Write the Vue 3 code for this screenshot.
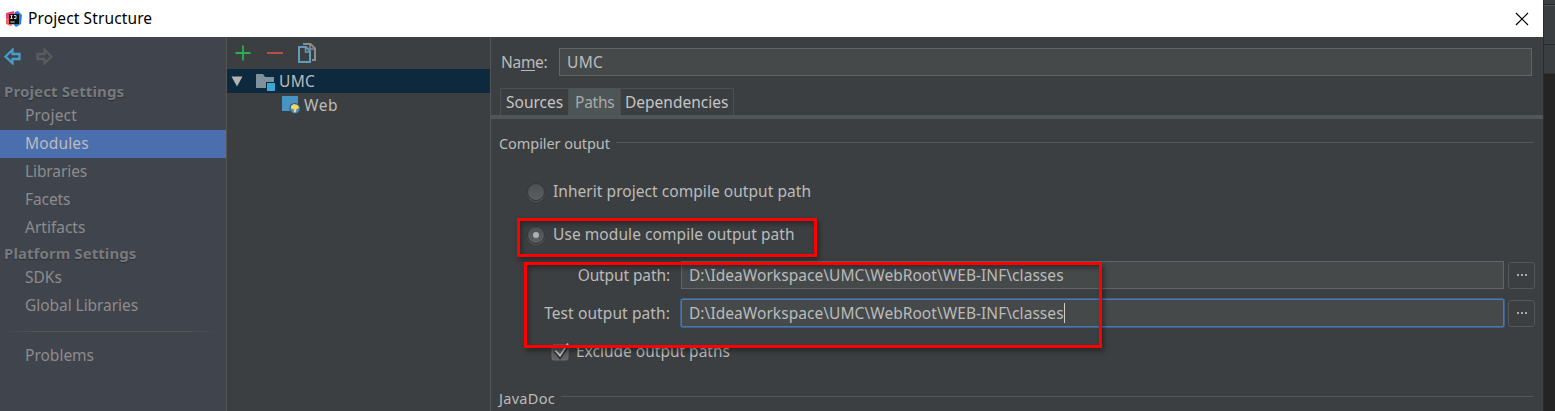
<script setup>
const projectItems = [
  { label: 'Project', ls: 'w-project' },
  { label: 'Modules', ls: 'w-modules', active: true },
  { label: 'Libraries', ls: 'w-libraries' },
  { label: 'Facets', ls: 'w-facets' },
  { label: 'Artifacts', ls: 'w-artifacts' },
]
const platformItems = [
  { label: 'SDKs', ls: 'w-sdks' },
  { label: 'Global Libraries', ls: 'w-global' },
]
const outputPath = 'D:\\IdeaWorkspace\\UMC\\WebRoot\\WEB-INF\\classes'
</script>

<template>
  <div class="screen">
    <div class="dialog">
      <header class="titlebar">
        <svg class="logo" width="16" height="16" viewBox="0 0 16 16">
          <path d="M0 2 4 1 8 0 9 4 4 9 0 8Z" fill="#f0437a" />
          <path d="M0 9 4 5 7 13 5 15 0 13Z" fill="#f2605c" />
          <path d="M9 1 12 0 16 4 15 13 10 16 6 12Z" fill="#1b7ff0" />
          <rect x="3" y="3" width="10" height="10" fill="#111" />
          <path d="M4.5 4.5h2M5.5 4.5v3M4.5 7.5h2M8 4.5h2v3H8M4.5 11h4" stroke="#ddd" fill="none" />
        </svg>
        <span class="title">Project Structure</span>
        <svg class="close" width="14" height="14" viewBox="0 0 14 14">
          <path d="M1 1 13 13M13 1 1 13" stroke="#000" stroke-width="1.2" />
        </svg>
      </header>

      <div class="body">
        <nav class="sidebar">
          <div class="history">
            <svg width="17" height="17" viewBox="0 0 17 17">
              <path d="M1.5 8.5 8.500 1.800V6H15.5V11H8.500V15.200Z" fill="none" stroke="#4a9cc9" stroke-width="2.300" />
            </svg>
            <svg width="17" height="17" viewBox="0 0 17 17">
              <path d="M15.5 8.5 8.500 1.800V6H1.5V11H8.500V15.200Z" fill="none" stroke="#5a5b5c" stroke-width="2.300" />
            </svg>
          </div>
          <div class="group first"><span class="w-ps">Project Settings</span></div>
          <div v-for="i in projectItems" :key="i.label" class="item" :class="{ active: i.active }">
            <span :class="i.ls">{{ i.label }}</span>
          </div>
          <div class="group"><span class="w-pf">Platform Settings</span></div>
          <div v-for="i in platformItems" :key="i.label" class="item">
            <span :class="i.ls">{{ i.label }}</span>
          </div>
          <div class="rule"></div>
          <div class="item"><span class="w-problems">Problems</span></div>
        </nav>

        <section class="tree">
          <div class="tools">
            <svg width="16" height="16" viewBox="0 0 16 16"><path d="M8 0.500V15.500M0.500 8H15.500" stroke="#27b04b" stroke-width="1.8" /></svg>
            <svg width="16" height="16" viewBox="0 0 16 16"><path d="M0 8H16" stroke="#cd5146" stroke-width="1.8" /></svg>
            <svg class="copy" width="18" height="20" viewBox="0 0 18 20">
              <path d="M5 1H12.500L17 5.500V17H14" fill="none" stroke="#8a8d8f" stroke-width="2" />
              <path d="M12 1V6H17" fill="none" stroke="#8a8d8f" stroke-width="1.500" />
              <path d="M1 4H8L12 8V19H1Z" fill="#3c3f41" stroke="#609dbd" stroke-width="2" />
              <path d="M7.500 4V9H12" fill="none" stroke="#609dbd" stroke-width="1.500" />
            </svg>
          </div>
          <div class="node selected">
            <svg class="caret" width="12" height="11" viewBox="0 0 12 11"><path d="M0.500 0.500H11.500L6 10.500Z" fill="#b3b3b3" /></svg>
            <svg class="folder" width="20" height="18" viewBox="0 0 20 18">
              <path d="M0 1H7L9 4H18V15H0Z" fill="#7f919d" />
              <rect x="10" y="9" width="10" height="9" fill="#0d293e" />
              <rect x="11" y="10" width="8" height="8" fill="#3ba7d6" />
            </svg>
            <span class="w-umc">UMC</span>
          </div>
          <div class="node child">
            <svg class="web" width="18" height="18" viewBox="0 0 18 18">
              <rect x="0" y="0" width="16" height="15" fill="#4794c1" />
              <circle cx="13" cy="12.500" r="5.500" fill="#3c4a52" />
              <circle cx="13" cy="12.500" r="4.700" fill="#3b8ed4" />
              <path d="M9 10 12 8 16 9.500 17 12 14.500 13 14 16 12 16.500 11.500 13 9 12.500Z" fill="#fbd65c" />
            </svg>
            <span class="w-web">Web</span>
          </div>
        </section>

        <main class="content">
          <div class="name-row">
            <label class="w-name">Na<u>m</u>e:</label>
            <div class="field"><span class="w-umc">UMC</span></div>
          </div>
          <div class="tabs">
            <div class="tab t1"><span class="w-sources">Sources</span></div>
            <div class="tab t2 on"><span class="w-paths">Paths</span></div>
            <div class="tab t3"><span class="w-deps">Dependencies</span></div>
          </div>
          <div class="section compiler"><span class="w-compiler">Compiler output</span><i></i></div>
          <div class="option o1"><b class="radio"></b><span class="w-inherit">Inherit project compile output path</span></div>
          <div class="option o2"><b class="radio checked"></b><span class="w-use">Use module compile output path</span></div>
          <div class="path-row p1">
            <label><span class="w-out">Output path:</span></label>
            <div class="field"><span class="w-path">{{ outputPath }}</span></div>
            <button><i></i><i></i><i></i></button>
          </div>
          <div class="path-row p2">
            <label><span class="w-test">Test output path:</span></label>
            <div class="field focused"><span class="w-path">{{ outputPath }}</span><em></em></div>
            <button><i></i><i></i><i></i></button>
          </div>
          <div class="exclude">
            <svg width="19" height="19" viewBox="0 0 19 19">
              <defs><linearGradient id="cb" x1="0" y1="0" x2="0" y2="1"><stop offset="0" stop-color="#505254" /><stop offset="1" stop-color="#626466" /></linearGradient></defs>
              <rect x="1" y="2" width="16" height="15" rx="2" fill="url(#cb)" stroke="#6b6d6f" />
              <path d="M4.500 8 9 13.500 17 1.500" fill="none" stroke="#26282a" stroke-width="4" />
              <path d="M4.500 7.500 9 12.500 17 0.500" fill="none" stroke="#b5b5b5" stroke-width="2" />
            </svg>
            <span class="w-exclude">Exclude output paths</span>
          </div>
          <div class="section javadoc"><span class="w-javadoc">JavaDoc</span><i></i></div>
        </main>
      </div>
    </div>
    <aside class="backdrop"><div class="b1"></div><div class="b2"></div><div class="b3"></div><div class="b4"></div></aside>
    <div class="mark m1"></div>
    <div class="mark m2"></div>
  </div>
</template>

<style>
body { margin: 0; background: #3c3f41; overflow: hidden; }
</style>

<style scoped>
* { box-sizing: border-box; }
.screen { position: relative; display: flex; width: 1555px; height: 411px; overflow: hidden; font: 15.5px/20px "Noto Sans", "Open Sans", sans-serif; color: #bbb; white-space: nowrap; }
.screen span { display: inline-block; }
svg { display: block; flex: none; }
.dialog { width: 1543px; flex: none; background: #3c3f41; }
.titlebar { height: 37px; background: #fff; color: #000; display: flex; align-items: center; padding: 0 14px 0 6px; }
.title { letter-spacing: .12px; margin-top: -2px; }
.logo { margin-right: 6px; }
.close { margin-left: auto; }
.body { display: flex; height: 374px; }
.sidebar { width: 227px; flex: none; background: #40444d; border-right: 1px solid #555; color: #8c8c8c; }
.history { display: flex; gap: 15px; padding: 11px 0 0 4px; height: 43px; }
.group { height: 22px; font-size: 15px; line-height: 23px; padding-left: 4px; font-weight: 700; color: #777a7d; text-shadow: 0 1px 1px #2e3136; }
.item { height: 28px; line-height: 27px; padding-left: 25px; }
.active { background: #4b6eaf; color: #bbb; width: 226px; }
.rule { height: 1px; margin: 11px 7px 10px 3px; background: linear-gradient(90deg, transparent, #555 15%, #555 85%, transparent); }
.tree { width: 264px; flex: none; border-right: 1px solid #555; }
.tools { height: 32px; display: flex; align-items: center; gap: 16px; padding-left: 8px; }
.copy { margin-left: -1px; }
.node { height: 24px; display: flex; align-items: center; }
.selected { background: #0d293e; padding-left: 4px; }
.folder { margin: 1px 3px 0 13px; }
.child { padding-left: 55px; }
.web { margin-right: 4px; }
.content { flex: 1; min-width: 0; }
.name-row { display: flex; align-items: center; padding: 11px 11px 0 10px; }
.name-row label { width: 58px; }
u { text-decoration: underline; text-decoration-thickness: 1px; text-underline-offset: 2px; }
.field { flex: 1; height: 28px; border: 1px solid #646464; background: #45494a; padding-left: 7px; display: flex; align-items: center; }
.tabs { margin-top: 12px; height: 31px; display: flex; padding-left: 9px; border-bottom: 4px solid #515658; }
.tab { height: 27px; border: 1px solid #4d4f50; border-bottom: 0; line-height: 26px; padding-left: 5px; color: #c4c4c4; }
.t1 { width: 69px; }
.t2 { width: 51px; }
.t3 { width: 114px; padding-left: 4px; }
.on { background: #4e5557; border-color: #4e5557; color: #aaa; }
.section { display: flex; align-items: center; padding: 0 10px 0 8px; height: 20px; font-size: 14.5px; }
.section span { margin-top: -2px; }
.section i { height: 1px; background: #555; flex: 1; margin: -3px 0 0 6px; }
.compiler { margin-top: 15px; }
.option { display: flex; align-items: center; height: 20px; padding-left: 36px; }
.option span { margin: -2px 0 0 8px; }
.o1 { margin-top: 28px; }
.o2 { margin-top: 23px; }
.radio { width: 18px; height: 18px; border-radius: 50%; background: linear-gradient(#4d5052, #5c5f62); border: 1px solid #35383a; box-shadow: 0 1px 0 #5a5d5f; display: flex; align-items: center; justify-content: center; }
.checked::after { content: ""; width: 6px; height: 6px; border-radius: 50%; background: #b0b0b0; }
.path-row { display: flex; align-items: center; height: 28px; padding-right: 8px; }
.path-row label { width: 190px; padding-right: 11px; text-align: right; flex: none; }
.path-row button { width: 27px; height: 27px; margin-left: 4px; border: 1px solid #555859; border-radius: 3px; background: transparent; display: flex; gap: 2px; align-items: center; justify-content: center; padding: 0; }
.path-row button i { width: 2px; height: 2px; background: #aaa; }
.p1 { margin-top: 16px; }
.p2 { margin-top: 10px; }
.focused { border-color: #4a78ab; border-radius: 2px; box-shadow: 0 0 0 1px #3f618a; }
em { width: 1px; height: 20px; background: #ccc; }
.exclude { display: flex; align-items: center; height: 20px; margin-top: 15px; padding-left: 60px; }
.exclude span { margin: -2px 0 0 6px; }
.javadoc { margin-top: 26px; }
.javadoc span { margin-top: 0; }
.backdrop { flex: 1; background: #242424; border-left: 1px solid #2a2c2d; }
.b1 { height: 5px; background: #3a3e40; border-bottom: 1px solid #252525; }
.b2 { height: 39px; background: #3a3e40; border-top: 1px solid #555; }
.b3 { height: 1px; background: #2b2b2b; }
.b4 { height: 29px; background: #3a3e40; border-bottom: 1px solid #303233; }
.mark { position: absolute; border: 3px solid #f00; box-shadow: 2px 3px 5px rgba(0,0,0,.4), inset 2px 3px 5px rgba(0,0,0,.35); }
.m1 { left: 517px; top: 218px; width: 300px; height: 39px; }
.m2 { left: 524px; top: 262px; width: 578px; height: 86px; }
.w-inherit { letter-spacing: .05px; }
.w-use { letter-spacing: .07px; }
.w-path { letter-spacing: .05px; }
.w-out { letter-spacing: -.1px; }
.w-test { letter-spacing: .1px; }
.w-paths { letter-spacing: -.25px; }
.w-name { letter-spacing: -.3px; }
.w-umc { letter-spacing: .3px; }
.w-web { letter-spacing: .6px; }
.w-project { letter-spacing: .2px; }
.w-modules { letter-spacing: .15px; }
.w-libraries { letter-spacing: -.1px; }
.w-facets { letter-spacing: -.1px; }
.w-global { letter-spacing: -.05px; }
.w-compiler { letter-spacing: -.07px; }
.w-javadoc { letter-spacing: .3px; }
.w-ps { letter-spacing: .13px; }
.w-pf { letter-spacing: .07px; }
</style>
